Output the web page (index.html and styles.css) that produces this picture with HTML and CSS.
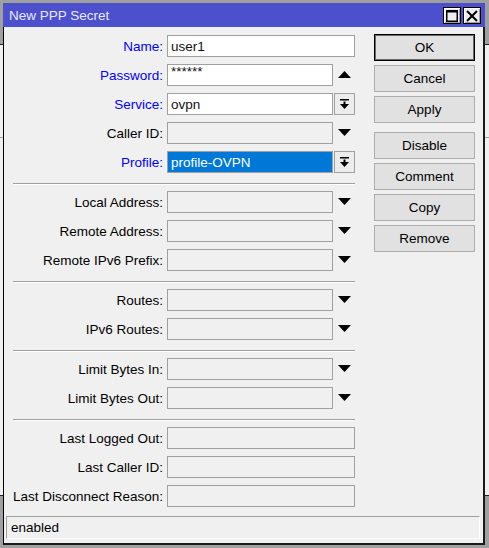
FILE: index.html
```html
<!DOCTYPE html>
<html>
<head>
<meta charset="utf-8">
<link rel="stylesheet" href="styles.css">
</head>
<body>
<div class="desk">
  <div class="win">
    <div class="titlebar">
      <span class="title">New PPP Secret</span>
      <div class="tbtns">
        <span class="tbtn"><svg width="12" height="12" viewBox="0 0 12 12"><rect x="0.75" y="0.75" width="10.5" height="10.5" fill="none" stroke="#000" stroke-width="1.5"/><rect x="0" y="0" width="12" height="2.5" fill="#000"/></svg></span>
        <span class="tbtn"><svg width="12" height="12" viewBox="0 0 12 12"><path d="M1 1 L11 11 M11 1 L1 11" stroke="#000" stroke-width="2"/></svg></span>
      </div>
    </div>
    <div class="content">
      <div class="main">
        <div class="form">
          <div class="section">
            <div class="row"><label class="lbl blue">Name:</label><div class="field full white">user1</div></div>
            <div class="row"><label class="lbl blue">Password:</label><div class="field white pw">******</div><span class="arr"><svg width="13" height="7" viewBox="0 0 13 7"><polygon points="6.5,0 13,7 0,7" fill="#000"/></svg></span></div>
            <div class="row"><label class="lbl blue">Service:</label><div class="field white">ovpn</div><span class="ddbtn"><svg width="9" height="11" viewBox="0 0 9 11"><rect x="0" y="0" width="9" height="1.5" fill="#000"/><rect x="3.5" y="2.5" width="2" height="3" fill="#000"/><polygon points="0,5 9,5 4.5,10" fill="#000"/></svg></span></div>
            <div class="row"><label class="lbl">Caller ID:</label><div class="field"></div><span class="arr"><svg width="13" height="7" viewBox="0 0 13 7"><polygon points="0,0 13,0 6.5,7" fill="#000"/></svg></span></div>
            <div class="row"><label class="lbl blue">Profile:</label><div class="field white sel"><span class="selbox">profile-OVPN</span></div><span class="ddbtn"><svg width="9" height="11" viewBox="0 0 9 11"><rect x="0" y="0" width="9" height="1.5" fill="#000"/><rect x="3.5" y="2.5" width="2" height="3" fill="#000"/><polygon points="0,5 9,5 4.5,10" fill="#000"/></svg></span></div>
          </div>
          <div class="sep"></div>
          <div class="section">
            <div class="row"><label class="lbl">Local Address:</label><div class="field"></div><span class="arr"><svg width="13" height="7" viewBox="0 0 13 7"><polygon points="0,0 13,0 6.5,7" fill="#000"/></svg></span></div>
            <div class="row"><label class="lbl">Remote Address:</label><div class="field"></div><span class="arr"><svg width="13" height="7" viewBox="0 0 13 7"><polygon points="0,0 13,0 6.5,7" fill="#000"/></svg></span></div>
            <div class="row"><label class="lbl">Remote IPv6 Prefix:</label><div class="field"></div><span class="arr"><svg width="13" height="7" viewBox="0 0 13 7"><polygon points="0,0 13,0 6.5,7" fill="#000"/></svg></span></div>
          </div>
          <div class="sep"></div>
          <div class="section">
            <div class="row"><label class="lbl">Routes:</label><div class="field"></div><span class="arr"><svg width="13" height="7" viewBox="0 0 13 7"><polygon points="0,0 13,0 6.5,7" fill="#000"/></svg></span></div>
            <div class="row"><label class="lbl">IPv6 Routes:</label><div class="field"></div><span class="arr"><svg width="13" height="7" viewBox="0 0 13 7"><polygon points="0,0 13,0 6.5,7" fill="#000"/></svg></span></div>
          </div>
          <div class="sep"></div>
          <div class="section">
            <div class="row"><label class="lbl">Limit Bytes In:</label><div class="field"></div><span class="arr"><svg width="13" height="7" viewBox="0 0 13 7"><polygon points="0,0 13,0 6.5,7" fill="#000"/></svg></span></div>
            <div class="row"><label class="lbl">Limit Bytes Out:</label><div class="field"></div><span class="arr"><svg width="13" height="7" viewBox="0 0 13 7"><polygon points="0,0 13,0 6.5,7" fill="#000"/></svg></span></div>
          </div>
          <div class="sep"></div>
          <div class="section">
            <div class="row"><label class="lbl">Last Logged Out:</label><div class="field full"></div></div>
            <div class="row"><label class="lbl">Last Caller ID:</label><div class="field full"></div></div>
            <div class="row"><label class="lbl">Last Disconnect Reason:</label><div class="field full"></div></div>
          </div>
        </div>
        <div class="buttons">
          <div class="btn default">OK</div>
          <div class="btn">Cancel</div>
          <div class="btn">Apply</div>
          <div class="btn gap">Disable</div>
          <div class="btn">Comment</div>
          <div class="btn">Copy</div>
          <div class="btn">Remove</div>
        </div>
      </div>
      <div class="status">enabled</div>
    </div>
  </div>
</div>
</body>
</html>
```

FILE: styles.css
```css
html, body {
  margin: 0;
  padding: 0;
}
body {
  background: linear-gradient(to bottom,
    #a0a0a0 0, #a0a0a0 44px,
    #202020 44px, #202020 45px,
    #f0f0f0 45px, #f0f0f0 137px,
    #a0a0a0 137px, #a0a0a0 138px,
    #f0f0f0 138px, #f0f0f0 495px,
    #202020 495px, #202020 496px,
    #a0a0a0 496px);
  font-family: "Liberation Sans", Arial, sans-serif;
  font-size: 13.5px;
  color: #000;
  width: 489px;
  height: 548px;
  overflow: hidden;
}
.desk {
  padding: 3px 0 0 3px;
  height: 548px;
  box-sizing: border-box;
}
.win {
  width: 482px;
  height: 542px;
  display: flex;
  flex-direction: column;
}
.titlebar {
  height: 24px;
  background: #4c50cc;
  display: flex;
  align-items: flex-start;
  justify-content: space-between;
  flex: none;
}
.title {
  color: #e8e8ff;
  padding-left: 6px;
  line-height: 25px;
  height: 24px;
}
.tbtns {
  display: flex;
  gap: 2px;
  padding-top: 4px;
  padding-right: 4px;
}
.tbtn {
  width: 16px;
  height: 15px;
  border: 1px solid #000;
  background: #eeeeee;
  box-shadow: inset 1px 1px 0 #fff, inset -1px -1px 0 #a0a0a0;
  display: flex;
  align-items: center;
  justify-content: center;
}
.content {
  flex: 1;
  background: #f0f0f0;
  border-left: 1px solid #000;
  border-right: 2px solid #1a1a1a;
  border-bottom: 2px solid #1a1a1a;
  display: flex;
  flex-direction: column;
}
.main {
  display: flex;
  flex: 1;
}
.form {
  padding: 8px 0 0 9px;
  width: 342px;
}
.section {
  display: flex;
  flex-direction: column;
  gap: 7px;
}
.row {
  display: flex;
  height: 22px;
  align-items: center;
}
.lbl {
  width: 150px;
  margin-right: 4px;
  text-align: right;
  line-height: 23px;
  height: 22px;
  white-space: nowrap;
}
.lbl.blue {
  color: #0000ff;
}
.field {
  box-sizing: border-box;
  width: 166px;
  height: 22px;
  border: 1px solid #a0a0a0;
  background: #f0f0f0;
  padding-left: 3px;
  line-height: 21px;
  color: #111;
  white-space: nowrap;
}
.field.full {
  width: 188px;
}
.field.white {
  background: #fff;
}
.field.pw {
  line-height: 14px;
}
.field.sel {
  padding: 0;
}
.selbox {
  display: block;
  height: 20px;
  background: #0078d7;
  color: #fff;
  padding-left: 3px;
  line-height: 21px;
}
.arr {
  width: 22px;
  height: 22px;
  display: flex;
  align-items: center;
  justify-content: center;
  padding-bottom: 2px;
  box-sizing: border-box;
}
.ddbtn {
  box-sizing: border-box;
  width: 21px;
  height: 22px;
  margin-left: 1px;
  border: 1px solid #a0a0a0;
  background: #ececec;
  display: flex;
  align-items: center;
  justify-content: center;
}
.sep {
  height: 0;
  border-top: 1px solid #a0a0a0;
  border-bottom: 1px solid #ffffff;
  margin: 10px 0 6px 0;
}
.buttons {
  margin-left: 19px;
  padding-top: 7px;
  display: flex;
  flex-direction: column;
  gap: 4px;
}
.btn {
  box-sizing: border-box;
  width: 101px;
  height: 27px;
  border: 1px solid #adadad;
  background: #e1e1e1;
  text-align: center;
  line-height: 25px;
}
.btn.default {
  border: 1px solid #000;
  box-shadow: inset 0 0 0 1px #6a6a6a;
}
.btn.gap {
  margin-top: 5px;
}
.status {
  box-sizing: border-box;
  margin: 0 3px 4px 2px;
  height: 23px;
  border-top: 1px solid #a0a0a0;
  border-left: 1px solid #a0a0a0;
  border-bottom: 1px solid #fff;
  border-right: 1px solid #fff;
  padding-left: 4px;
  line-height: 21px;
}
```
